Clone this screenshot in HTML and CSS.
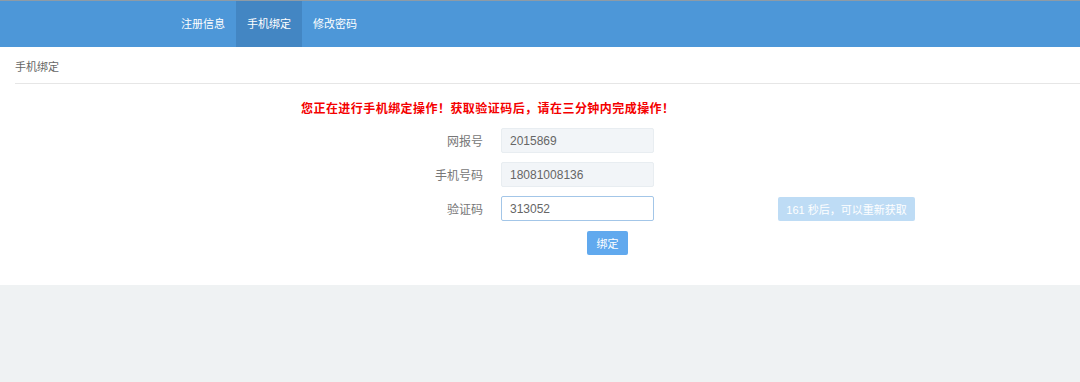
FILE: index.html
```html
<!DOCTYPE html>
<html lang="zh-CN">
<head>
  <meta charset="UTF-8">
  <meta name="viewport" content="width=device-width, initial-scale=1.0">
  <title>手机绑定</title>
  <link rel="stylesheet" href="styles.css">
</head>
<body>
  <nav class="topnav">
    <a href="#" class="nav-item">注册信息</a>
    <a href="#" class="nav-item active">手机绑定</a>
    <a href="#" class="nav-item">修改密码</a>
  </nav>

  <div class="panel">
    <div class="panel-title">手机绑定</div>

    <p class="warning">您正在进行手机绑定操作！获取验证码后，请在三分钟内完成操作！</p>

    <form class="bind-form">
      <div class="form-row">
        <label class="form-label">网报号</label>
        <input class="form-input" type="text" value="2015869" disabled>
      </div>
      <div class="form-row">
        <label class="form-label">手机号码</label>
        <input class="form-input" type="text" value="18081008136" disabled>
      </div>
      <div class="form-row">
        <label class="form-label">验证码</label>
        <input class="form-input focus" type="text" value="313052">
        <button type="button" class="code-btn" disabled>161 秒后，可以重新获取</button>
      </div>
      <div class="form-row">
        <button type="submit" class="bind-btn">绑定</button>
      </div>
    </form>
  </div>
</body>
</html>
```

FILE: styles.css
```css
body {
  margin: 0;
  padding: 0;
  background-color: #eff2f3;
  font-family: "Liberation Sans", "Noto Sans CJK SC", sans-serif;
  color: #555;
}

.topnav {
  display: flex;
  height: 46px;
  padding-left: 170px;
  border-top: 1px solid #8e9ba6;
  background-color: #4d97d8;
}

.nav-item {
  display: block;
  padding: 0 11px;
  line-height: 46px;
  font-size: 11px;
  color: white;
  text-decoration: none;
}

  .nav-item.active {
    background-color: #4386c3;
  }

.panel {
  background-color: white;
  padding-bottom: 30px;
  box-shadow: 0 1px 1px #e0e4e6;
}

.panel-title {
  margin-left: 15px;
  padding: 12px 0 8px;
  line-height: 16px;
  font-size: 11px;
  color: #666;
  border-bottom: 1px solid #e6e6e6;
}

.warning {
  margin: 16px 0 10px 301px;
  line-height: 18px;
  font-size: 12px;
  letter-spacing: 0.45px;
  font-weight: bold;
  color: #f40000;
}

.bind-form {
  display: flex;
  flex-direction: column;
  gap: 9px;
}

.form-row {
  display: flex;
  align-items: center;
  height: 25px;
}

.form-label {
  flex: none;
  width: 501px;
  padding-right: 18px;
  box-sizing: border-box;
  text-align: right;
  font-size: 12px;
  color: #777;
}

.form-input {
  flex: none;
  width: 153px;
  height: 25px;
  box-sizing: border-box;
  padding: 0 8px;
  border: 1px solid #e8edf1;
  border-radius: 2px;
  background-color: #f2f5f8;
  font-family: inherit;
  font-size: 12px;
  color: #666;
}

  .form-input.focus {
    background-color: white;
    border-color: #a3c6e8;
    outline: none;
  }

.code-btn {
  flex: none;
  margin-left: 124px;
  width: 137px;
  height: 24px;
  border: none;
  border-radius: 2px;
  background-color: #bedcf5;
  color: white;
  font-family: inherit;
  font-size: 11px;
}

.bind-btn {
  margin: 0 0 0 587px;
  width: 41px;
  height: 24px;
  border: none;
  border-radius: 2px;
  background-color: #61a9ee;
  color: white;
  font-family: inherit;
  font-size: 11px;
  cursor: pointer;
}
```
